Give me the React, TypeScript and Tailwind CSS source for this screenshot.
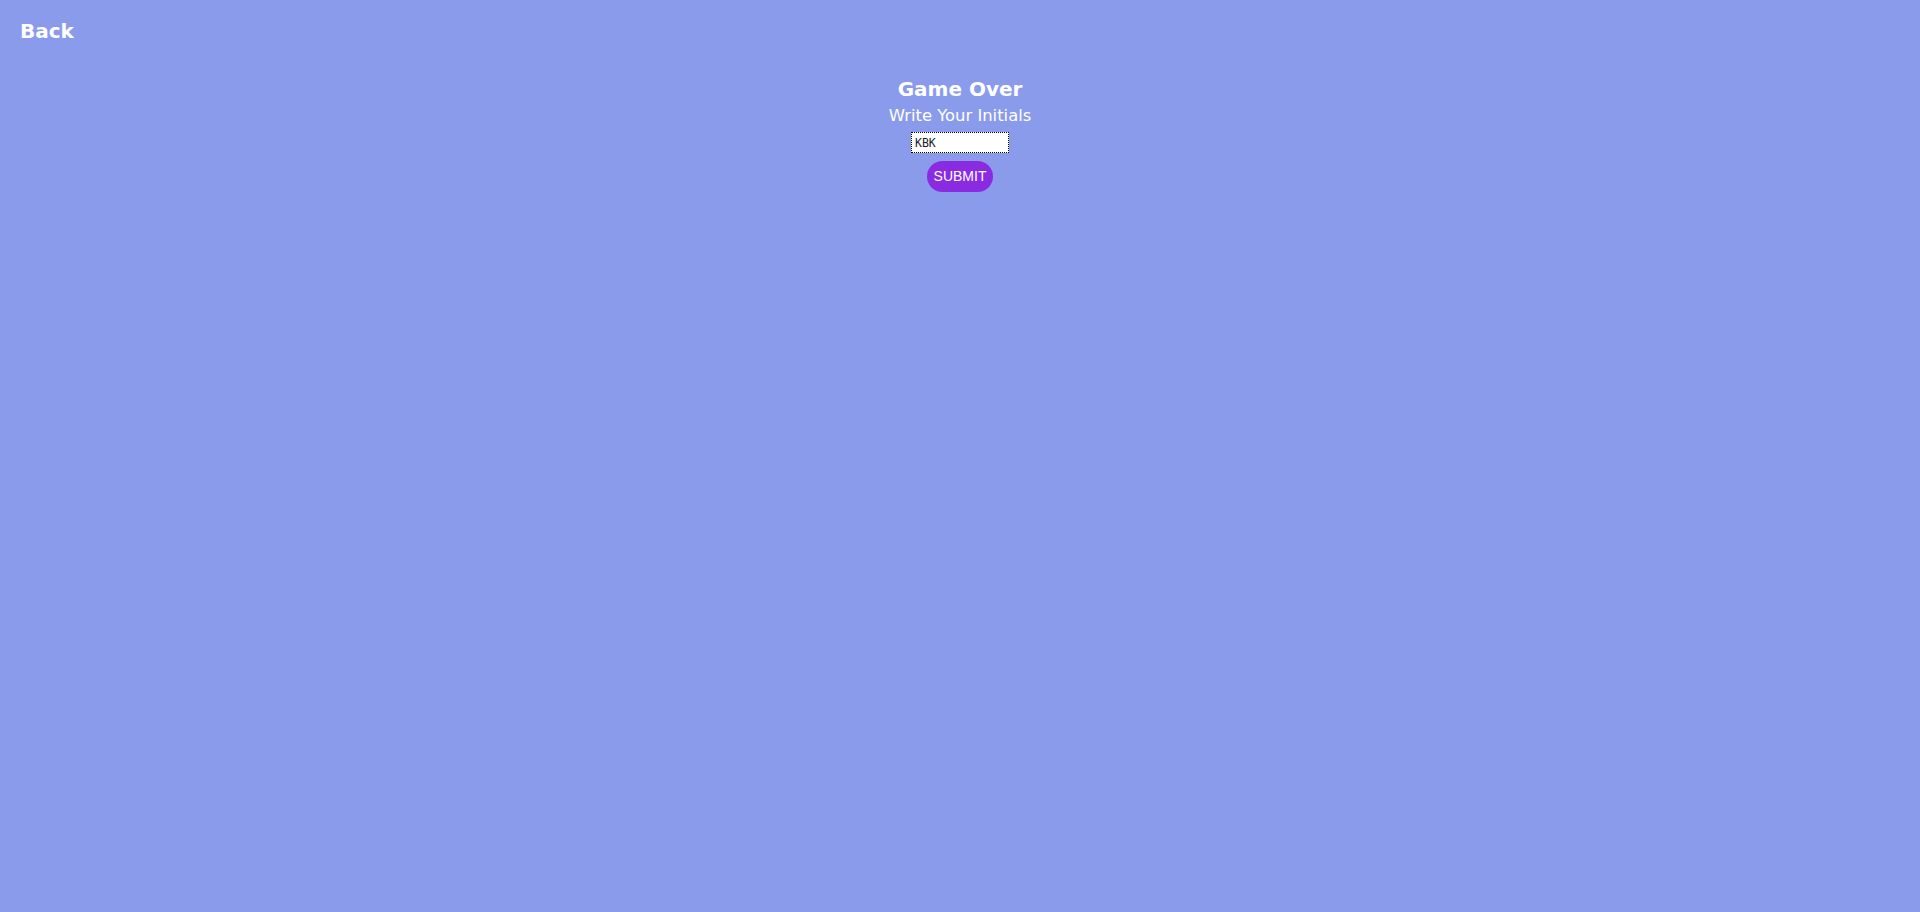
import React from "react";

export default function App() {
  return (
    <div className="min-h-[912px] w-full bg-[#8a9bec] font-['DejaVu_Sans',Verdana,sans-serif] text-white">
      <div className="px-5 pt-[18px]">
        <a className="text-[20px] font-bold leading-[26px] cursor-pointer">Back</a>
      </div>
      <div className="flex flex-col items-center pt-[32px]">
        <h1 className="text-[20px] font-bold leading-[24px]">Game Over</h1>
        <p className="mt-[5px] text-[16.4px] leading-[20px]">Write Your Initials</p>
        <input
          defaultValue="KBK"
          className="mt-[6px] h-[21px] w-[98px] border border-dotted border-black bg-white px-[3px] font-['DejaVu_Sans_Mono',monospace] text-[11.5px] font-normal text-[#1a1a2e] outline-none"
        />
        <button className="mt-[8px] h-[31px] rounded-full bg-[#8a2be2] px-[7px] font-['Liberation_Sans',Arial,sans-serif] text-[14px] text-white">
          SUBMIT
        </button>
      </div>
    </div>
  );
}
